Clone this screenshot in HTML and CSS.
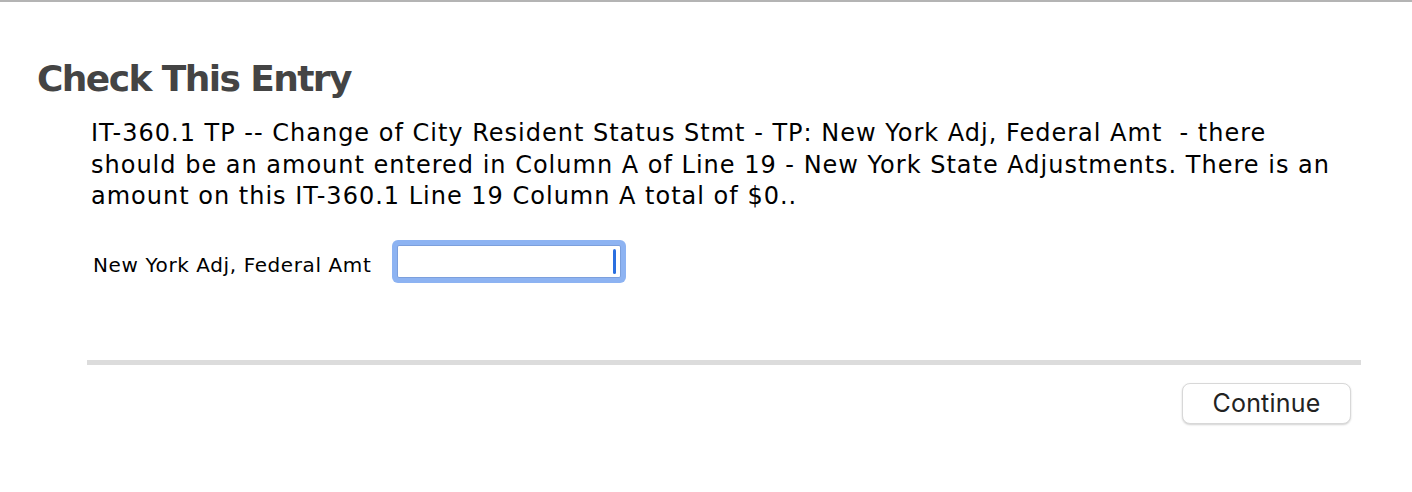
FILE: index.html
```html
<html>
	<head>
<link rel="stylesheet" href="styles.css">
	</head>
	<body>
		<div class="topline"></div>
		<div class="dialog">
			<h2 class="title">Check This Entry</h2>
			<div class="content">
				<p class="message">IT-360.1 TP -- Change of City Resident Status Stmt - TP: New York Adj, Federal Amt&nbsp; - there should be an amount entered in Column A of Line 19 - New York State Adjustments. There is an amount on this IT-360.1 Line 19 Column A total of $0..</p>
				<div class="field">
					<label class="fieldLabel">New York Adj, Federal Amt</label>
					<div class="inputBox"><span class="caret"></span></div>
				</div>
			</div>
			<div class="footer">
				<div class="separator"></div>
				<div class="buttons">
					<button class="button">Continue</button>
				</div>
			</div>
		</div>
	</body>
</html>
```

FILE: styles.css
```css
body {
    margin: 0;
    background: #ffffff;
    font-family: "DejaVu Sans", Verdana, sans-serif;
    color: #000000;
}

.topline {
    height: 2px;
    background: #b4b4b4;
}

.dialog {
    padding: 0 51px 0 37px;
}

.title {
    margin: 54px 0 0 0;
    font-size: 36px;
    letter-spacing: -1.6px;
    font-weight: bold;
    color: #444444;
    line-height: 46px;
}

.content {
    padding-left: 54px;
}

.message {
    margin: 16px 0 0 0;
    font-size: 24px;
    letter-spacing: 1px;
    line-height: 31.5px;
    width: 1255px;
}

.field {
    display: flex;
    align-items: center;
    margin-top: 27px;
}

.fieldLabel {
    font-size: 20px;
    letter-spacing: 0.6px;
    margin: 7px 21px 0 2px;
}

.inputBox {
    width: 218px;
    height: 31px;
    margin: 5px;
    border: 1px solid #7c9fdc;
    border-radius: 2px;
    box-shadow: 0 0 0 5px #8db3f2;
    background: #ffffff;
    display: flex;
    justify-content: flex-end;
    align-items: center;
    padding-right: 4px;
}

.caret {
    width: 3px;
    height: 25px;
    border-radius: 2px;
    background: #2a6fe0;
}

.footer {
    padding-left: 50px;
    margin-top: 77px;
}

.separator {
    height: 5px;
    background: #dcdcdc;
}

.buttons {
    display: flex;
    justify-content: flex-end;
    padding-top: 18px;
    padding-right: 10px;
}

.button {
    width: 169px;
    height: 41px;
    border: 1px solid #d8d8d8;
    border-radius: 8px;
    background: #ffffff;
    box-shadow: 0 1px 2px rgba(0, 0, 0, 0.18);
    font-family: Inter, "DejaVu Sans", sans-serif;
    font-size: 25px;
    letter-spacing: 0.2px;
    color: #222222;
}
```
